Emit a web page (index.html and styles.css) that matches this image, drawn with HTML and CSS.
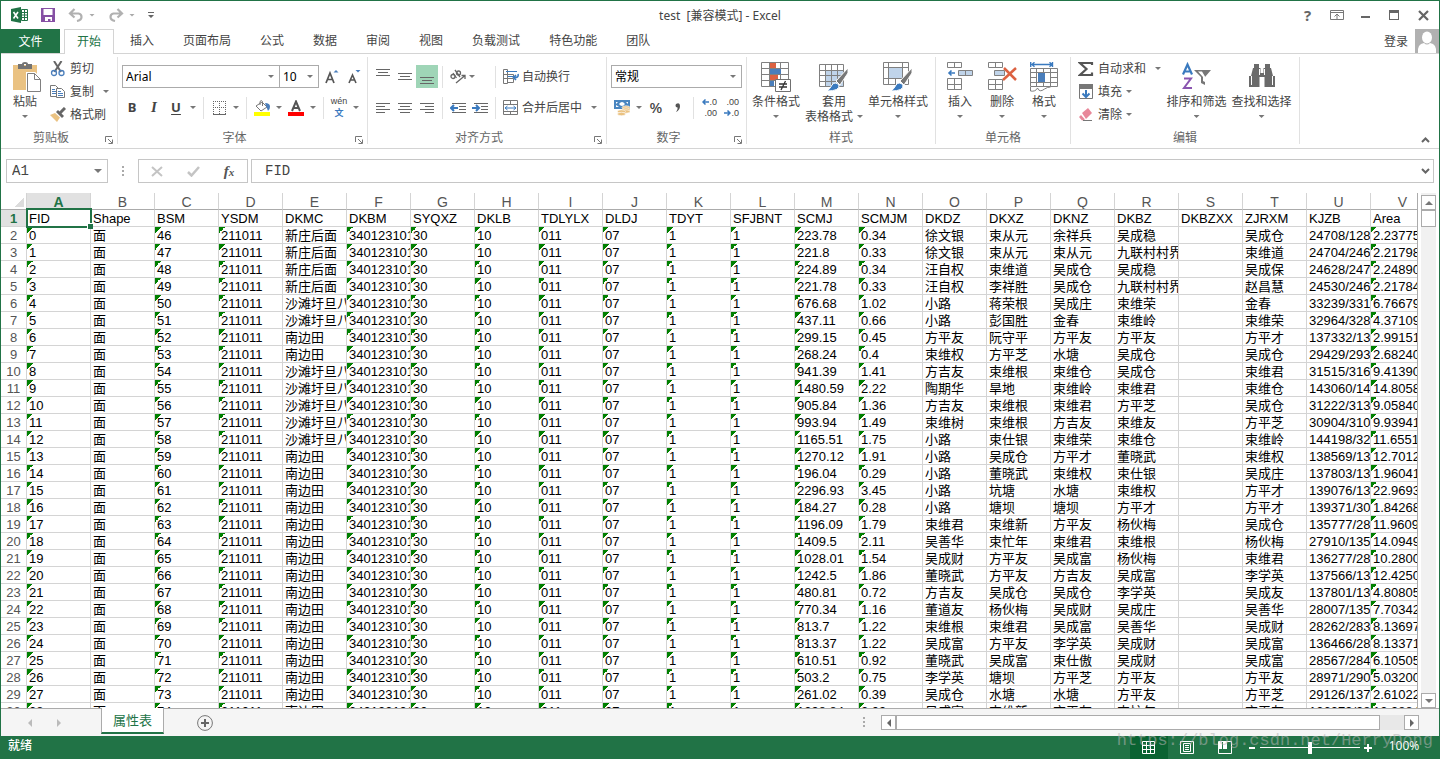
FILE: index.html
```html
<!DOCTYPE html>
<html lang="zh-CN">
<head>
<meta charset="utf-8">
<title>test [兼容模式] - Excel</title>
<link rel="stylesheet" href="styles.css">
</head>
<body>
<div class="app">
  <header class="titlebar">
    <div class="quick">
      <svg class="logo" width="18" height="16" viewBox="0 0 18 16"><path fill="#217346" d="M0 2 10 0v16L0 14z"/><path fill="#fff" stroke="#217346" d="M10.500 2.500h6v11h-6z"/><path stroke="#217346" d="M11 5.500h5M11 8h5M11 10.500h5M13.500 3v10"/><path stroke="#fff" stroke-width="1.600" d="m2.500 5 4.500 6.500M7 5l-4.500 6.500"/></svg>
      <button class="tool" aria-label="保存"><svg width="14" height="14" viewBox="0 0 14 14"><path fill="#8650a4" d="M0 0h14v14H0z"/><path fill="#fff" d="M2.500 1h9v6h-9zM4 9h7v4H9.500v-2H7v2H4z"/></svg></button>
      <button class="tool" aria-label="撤消"><svg width="16" height="14" viewBox="0 0 16 14"><path fill="none" stroke="#b1b1b1" stroke-width="2.200" d="M2 5.500h8.500q3 .500 3 3.500t-4.500 4M6.500 1 2 5.500 6.500 9.500"/></svg></button>
      <span class="caret light"></span>
      <button class="tool redo" aria-label="恢复"><svg width="16" height="14" viewBox="0 0 16 14"><path fill="none" stroke="#b1b1b1" stroke-width="2.200" d="M14 5.500H5.500q-3 .500-3 3.500T7 13M9.500 1 14 5.500 9.500 9.500"/></svg></button>
      <span class="caret light"></span>
      <button class="tool custom" aria-label="自定义快速访问工具栏"><svg width="6" height="7" viewBox="0 0 6 7"><path fill="#666" d="M0 0h6v1H0zM0 3h6L3 6z"/></svg></button>
    </div>
    <h1 class="title">test&nbsp; [兼容模式] - Excel</h1>
    <div class="window-tools">
      <button aria-label="帮助" class="help">?</button>
      <button aria-label="功能区显示选项"><svg width="14" height="12" viewBox="0 0 14 12" fill="none" stroke="#777"><path d="M.5 1.500h13v9H.5zM.5 3.500h13M7 10V5.500M4.500 7.500 7 5l2.500 2.500"/></svg></button>
      <button aria-label="最小化"><svg width="10" height="12" viewBox="0 0 10 12"><path fill="#666" d="M0 7h9v2H0z"/></svg></button>
      <button aria-label="最大化"><svg width="11" height="11" viewBox="0 0 11 11"><path fill="#666" d="M0 0h10v10H0zm1 3v6h8V3z" fill-rule="evenodd"/></svg></button>
      <button aria-label="关闭"><svg width="11" height="11" viewBox="0 0 11 11"><path stroke="#666" stroke-width="2.200" d="m1 1 9 9M10 1l-9 9"/></svg></button>
    </div>
  </header>

  <nav class="tabs">
    <button class="file">文件</button>
    <button class="tab active">开始</button>
    <button class="tab">插入</button>
    <button class="tab">页面布局</button>
    <button class="tab">公式</button>
    <button class="tab">数据</button>
    <button class="tab">审阅</button>
    <button class="tab">视图</button>
    <button class="tab">负载测试</button>
    <button class="tab">特色功能</button>
    <button class="tab">团队</button>
    <button class="login">登录<svg width="24" height="24" viewBox="0 0 24 24"><path fill="#b1b1b1" d="M0 0h24v24H0z"/><ellipse cx="12" cy="8.500" rx="5" ry="6" fill="#fff"/><path fill="#fff" d="M3 24q-1-9 6-10 3 3 6 0 7 1 6 10z"/></svg></button>
  </nav>

  <main class="ribbon">
    <section class="group clipboard">
      <div class="body">
        <button class="big paste"><svg width="32" height="30" viewBox="0 0 32 30"><path fill="#eac282" d="M4 3h24v25H4z"/><path fill="#737373" d="M9 2h4q0-2 3-2t3 2h4v5H9zm6 0v2h2V2z"/><path fill="#fff" stroke="#fff" stroke-width="3" d="M18.500 11.500h7l6 6v12h-13z"/><path fill="#fff" stroke="#808080" d="M18.500 11.500h7l6 6v12h-13zM25.500 11.500v6h6"/></svg><span>粘贴</span><i class="caret"></i></button>
        <div class="list">
          <button class="row"><svg width="16" height="16" viewBox="0 0 16 16" fill="none"><path stroke="#666" stroke-width="2" d="M4 0l7 11M11.500 0 4.500 11"/><circle cx="4" cy="12" r="2.500" stroke="#4a7ebb" stroke-width="1.300"/><circle cx="11.500" cy="12" r="2.500" stroke="#4a7ebb" stroke-width="1.300"/></svg><span>剪切</span></button>
          <button class="row"><svg width="16" height="16" viewBox="0 0 16 16" fill="#fff" stroke="#777"><path d="M.5 1.500h5l3 3v8h-8z"/><path stroke="#4a7ebb" d="M2 5.500h3M2 7.500h4M2 9.500h4"/><path d="M6.500 4.500h5l3 3v6h-8z"/><path stroke="#4a7ebb" d="M8 7.500h3M8 9.500h5M8 11.500h5"/></svg><span>复制</span><i class="caret far"></i></button>
          <button class="row"><svg width="16" height="16" viewBox="0 0 16 16"><path fill="#eac282" d="m0 8 5-2 5 4.500L7 15z"/><path fill="#666" d="m6 5 2-2 6 6-2 2z"/><path stroke="#666" stroke-width="3" d="m10 6 5-5"/></svg><span>格式刷</span></button>
        </div>
      </div>
      <footer><span>剪贴板</span><button class="launch" aria-label="剪贴板选项"><svg width="8" height="8" viewBox="0 0 8 8"><path d="M.5 6V.5H7M3 3l4 4M7.500 3.500v4h-4" fill="none" stroke="#777"/></svg></button></footer>
    </section>

    <section class="group font">
      <div class="body lines">
        <div class="line combos">
          <label class="combo name"><select aria-label="字体"><option>Arial</option></select></label><label class="combo size"><select aria-label="字号"><option>10</option></select></label>
          <button class="tool grow" aria-label="增大字号"><svg width="14" height="16" viewBox="0 0 14 16"><path fill="none" stroke="#555" stroke-width="1.700" d="M1 14 5 4l4 10M2.500 10.500h5"/><path fill="#4a7ebb" d="M8.500 3.500h5L11 1z"/></svg></button>
          <button class="tool" aria-label="减小字号"><svg width="14" height="16" viewBox="0 0 14 16"><path fill="none" stroke="#555" stroke-width="1.600" d="m2 14 3.500-8L9 14M3.500 11h4"/><path fill="#4a7ebb" d="M8.500 1h5L11 3.500z"/></svg></button>
        </div>
        <div class="line">
          <button class="tool bold">B</button><button class="tool italic">I</button><button class="tool under">U</button><button class="drop" aria-label="下划线选项"><i class="caret"></i></button>
          <hr>
          <button class="tool" aria-label="边框"><svg width="13" height="14" viewBox="0 0 13 14" fill="none" stroke="#666" shape-rendering="crispEdges"><path stroke-dasharray="1 1" d="M0 .5h13M0 6.500h13M.5 0v13M6.500 0v13M12.500 0v13"/><path d="M0 13.500h13"/></svg></button><button class="drop" aria-label="边框选项"><i class="caret"></i></button>
          <hr>
          <button class="tool" aria-label="填充颜色"><svg width="16" height="16" viewBox="0 0 16 16"><path fill="#ff0" d="M0 12h16v4H0z"/><path fill="#fff" stroke="#777" d="m2 6 6-4 5 5-6 4zM6 5V1.500q1.500-2 2.500 0V6"/><path fill="#4a7ebb" d="M11 3q5 0 5 3.500t-2 4.500z"/></svg></button><button class="drop" aria-label="填充颜色选项"><i class="caret"></i></button>
          <button class="tool" aria-label="字体颜色"><svg width="16" height="16" viewBox="0 0 16 16"><path fill="red" d="M0 12h16v4H0z"/><path fill="none" stroke="#555" stroke-width="2" d="m4 11 4-9.500L12 11M5.500 8h5"/></svg></button><button class="drop" aria-label="字体颜色选项"><i class="caret"></i></button>
          <hr>
          <button class="tool wen"><span>wén</span><b>文</b></button><button class="drop" aria-label="拼音选项"><i class="caret"></i></button>
        </div>
      </div>
      <footer><span>字体</span><button class="launch" aria-label="字体选项"><svg width="8" height="8" viewBox="0 0 8 8"><path d="M.5 6V.5H7M3 3l4 4M7.500 3.500v4h-4" fill="none" stroke="#777"/></svg></button></footer>
    </section>

    <section class="group align">
      <div class="body lines">
        <div class="line">
          <button class="tool" aria-label="顶端对齐"><svg width="14" height="16" viewBox="0 0 14 16" stroke="#666"><path d="M0 .5h14M2 3.500h10M0 6.500h14"/></svg></button><button class="tool" aria-label="垂直居中"><svg width="14" height="16" viewBox="0 0 14 16" stroke="#666"><path d="M0 4.500h14M2 7.500h10M0 10.500h14"/></svg></button><button class="tool on" aria-label="底端对齐"><svg width="14" height="16" viewBox="0 0 14 16" stroke="#666"><path d="M0 8.500h14M2 11.500h10M0 14.500h14"/></svg></button>
          <hr>
          <button class="tool" aria-label="方向"><svg width="16" height="16" viewBox="0 0 16 16" fill="none" stroke="#666" stroke-width="1.300"><circle cx="3" cy="7.500" r="2"/><path d="m3 4 3.500 5M5 1l5 7"/><circle cx="8.500" cy="4" r="2"/><path d="m6 14 9-7.500M11.500 6.500H15V10"/></svg></button><button class="drop wide" aria-label="方向选项"><i class="caret"></i></button>
          <hr>
          <button class="text"><svg width="16" height="16" viewBox="0 0 16 16" fill="none" stroke="#777"><path d="M.5.5h4v14h-4zM.5 5.500h10v4H.5zM4 13.500h6.500V10"/><path stroke="#3a7abf" d="M3 2.500h11M5 7.500h5"/><path stroke="#3a7abf" stroke-width="1.600" d="M15 5q1 4-4 3.500M13 6l-2.500 2.500L13 11"/></svg><span>自动换行</span></button>
        </div>
        <div class="line">
          <button class="tool" aria-label="左对齐"><svg width="14" height="12" viewBox="0 0 14 12" stroke="#666"><path d="M0 1.500h14M0 4.500h9M0 7.500h14M0 10.500h9"/></svg></button><button class="tool" aria-label="居中"><svg width="14" height="12" viewBox="0 0 14 12" stroke="#666"><path d="M0 1.500h14M2 4.500h10M0 7.500h14M2 10.500h10"/></svg></button><button class="tool" aria-label="右对齐"><svg width="14" height="12" viewBox="0 0 14 12" stroke="#666"><path d="M0 1.500h14M5 4.500h9M0 7.500h14M5 10.500h9"/></svg></button>
          <hr>
          <button class="tool" aria-label="减少缩进量"><svg width="16" height="12" viewBox="0 0 16 12" stroke="#666" fill="none"><path d="M2 1.500h14M9 4.500h7M9 7.500h7M2 10.500h14"/><path stroke="#3a7abf" stroke-width="2" d="M8 6H1M4 3 1 6l3 3"/></svg></button><button class="tool" aria-label="增加缩进量"><svg width="16" height="12" viewBox="0 0 16 12" stroke="#666" fill="none"><path d="M2 1.500h14M9 4.500h7M9 7.500h7M2 10.500h14"/><path stroke="#3a7abf" stroke-width="2" d="M0 6h7M4 3l3 3-3 3"/></svg></button>
          <hr>
          <button class="text"><svg width="16" height="16" viewBox="0 0 16 16" fill="none" stroke="#777"><path d="M.5.5h14v14H.5zM.5 4.500h14M.5 11.500h14M7.500 0v4M7.500 12v3"/><path stroke="#3a7abf" d="M2 8h11M4.500 6 2 8l2.500 2M10.500 6 13 8l-2.500 2"/></svg><span>合并后居中</span></button><button class="drop gap" aria-label="合并选项"><i class="caret"></i></button>
        </div>
      </div>
      <footer><span>对齐方式</span><button class="launch" aria-label="对齐选项"><svg width="8" height="8" viewBox="0 0 8 8"><path d="M.5 6V.5H7M3 3l4 4M7.500 3.500v4h-4" fill="none" stroke="#777"/></svg></button></footer>
    </section>

    <section class="group number">
      <div class="body lines">
        <div class="line"><label class="combo format"><select aria-label="数字格式"><option>常规</option></select></label></div>
        <div class="line">
          <button class="tool" aria-label="会计数字格式"><svg width="16" height="16" viewBox="0 0 16 16"><path fill="#4a86c0" d="M0 0h16v9H0z"/><path fill="#fff" d="M2 2h2L2 4zM14 2h-2l2 2zM2 7h3L2 5zM5 4q3-4 6 0-3 4-6 0z"/><g fill="#eac282" stroke="#fff" stroke-width=".6"><ellipse cx="12" cy="7.500" rx="4" ry="1.700"/><ellipse cx="12" cy="9.500" rx="4" ry="1.700"/><ellipse cx="12" cy="11.500" rx="4" ry="1.700"/><ellipse cx="7.500" cy="11.500" rx="4" ry="1.700"/><ellipse cx="7.500" cy="14" rx="4" ry="1.700"/></g></svg></button><button class="drop" aria-label="会计格式选项"><i class="caret"></i></button><button class="tool percent">%</button><button class="tool" aria-label="千位分隔样式"><svg width="6" height="10" viewBox="0 0 6 10"><path fill="#555" d="M1 1q4-2 4 2 0 4-4 6 2-3 1.500-4.500Q-.5 4 1 1z"/></svg></button>
          <hr>
          <button class="tool dec" aria-label="增加小数位数"><span><svg width="7" height="6" viewBox="0 0 7 6"><path fill="none" stroke="#3a7abf" stroke-width="1.500" d="M7 3H1M3.500.5 1 3l2.500 2.500"/></svg>.0</span><span>.00</span></button><button class="tool dec" aria-label="减少小数位数"><span>.00</span><span><svg width="7" height="6" viewBox="0 0 7 6"><path fill="none" stroke="#3a7abf" stroke-width="1.500" d="M0 3h6M3.500.5 6 3 3.500 5.500"/></svg>.0</span></button>
        </div>
      </div>
      <footer><span>数字</span><button class="launch" aria-label="数字选项"><svg width="8" height="8" viewBox="0 0 8 8"><path d="M.5 6V.5H7M3 3l4 4M7.500 3.500v4h-4" fill="none" stroke="#777"/></svg></button></footer>
    </section>

    <section class="group styles">
      <div class="body">
        <button class="big cond"><svg width="30" height="30" viewBox="0 0 30 30"><path fill="#fff" stroke="#808080" d="M.5.5h27v24H.5zM.5 6.500h27M.5 12.500h27M.5 18.500h27M8.500 0v24M19.500 0v24"/><path fill="#dc6141" d="M9 1h6v5H9zM9 13h8v5H9z"/><path fill="#4a7ebb" d="M9 7h11v5H9zM9 19h4v5H9z"/><path fill="#fff" stroke="#707070" d="M14.500 17.500h15v12h-15z"/><path stroke="#333" stroke-width="1.300" d="M18 22h8M18 25h8M24.500 19l-4.500 9"/></svg><span>条件格式</span><i class="caret"></i></button>
        <button class="big table-style"><svg width="30" height="30" viewBox="0 0 30 30"><path fill="#fff" d="M.5 2.500h24v22H.5z"/><path fill="#c0d4ea" d="M7 8h18v17H7z"/><path fill="none" stroke="#808080" d="M.5 2.500h24v22H.5zM.5 8.500h24M.5 13.500h24M.5 19.500h24M6.500 2v22M12.500 2v22M18.500 2v22"/><path fill="#777" stroke="#fff" d="M29 6 17 19l4 4 8-12z"/><path fill="#3a7abf" stroke="#fff" d="M8 29q3-2 5-6 3-4 7 0 1 6-12 6z"/></svg><span>套用</span><span class="inline">表格格式<i class="caret"></i></span></button>
        <button class="big cell-style"><svg width="30" height="30" viewBox="0 0 30 30"><path fill="#fff" stroke="#808080" d="M.5.5h25v22H.5zM.5 5.500h25M.5 16.500h25M5.500 0v22M19.500 0v22M12.500 17v5"/><path fill="#c0d4ea" d="M6 6h13v10H6z"/><path fill="#777" stroke="#fff" d="M29 6 17 19l4 4 8-12z"/><path fill="#3a7abf" stroke="#fff" d="M8 29q3-2 5-6 3-4 7 0 1 6-12 6z"/></svg><span>单元格样式</span><i class="caret"></i></button>
      </div>
      <footer><span>样式</span></footer>
    </section>

    <section class="group cells">
      <div class="body">
        <button class="big"><svg width="28" height="30" viewBox="0 0 28 30" fill="none" stroke="#808080"><path d="M1.500.5h14v5h-14zM8.500 0v5M1.500 16.500h14v11h-14zM8.500 16v11M1.500 22.500h14"/><path fill="#c0d4ea" d="M12.500 8.500h14v5h-14zM19.500 8v5"/><path stroke="#3a7abf" stroke-width="1.600" d="M9 11H3M5.500 8.500 3 11l2.500 2.500"/></svg><span>插入</span><i class="caret"></i></button>
        <button class="big"><svg width="30" height="30" viewBox="0 0 30 30" fill="none" stroke="#808080"><path d="M1.500.5h14v5h-14zM8.500 0v5M1.500 17.500h14v10h-14zM8.500 17v10M1.500 22.500h14"/><path fill="#c0d4ea" d="M7.500 8.500h10v5h-10z"/><path stroke="#dc6141" stroke-width="2.500" d="m17 6 12 12M29 6 16 18"/></svg><span>删除</span><i class="caret"></i></button>
        <button class="big"><svg width="28" height="30" viewBox="0 0 28 30" fill="none" stroke="#808080"><path d="M.5 6.500h27v18H.5zM.5 10.500h27M.5 20.500h27M6.500 6v18M13.500 6v5M13.500 20v5M20.500 6v18M.5 15.500h6M20.500 15.500h7M.5 25v4q5 1 7-3 2 5 7 1 3-2 6-2"/><path fill="#4a7ebb" stroke="none" d="M8 11h7v9H8z"/><path stroke="#3a7abf" stroke-width="1.400" d="M.7 0v5M22.500 0v5M2 2.500h20M4.500.3 2 2.500l2.500 2.200M19.500.3 22 2.500l-2.500 2.200"/></svg><span>格式</span><i class="caret"></i></button>
      </div>
      <footer><span>单元格</span></footer>
    </section>

    <section class="group edit">
      <div class="body">
        <div class="list">
          <button class="row"><svg width="16" height="16" viewBox="0 0 16 16"><path fill="none" stroke="#555" stroke-width="2.200" d="M14 4V2H2l6.500 6L2 14h12v-2.500"/></svg><span>自动求和</span><i class="caret far"></i></button>
          <button class="row"><svg width="16" height="16" viewBox="0 0 16 16"><path fill="#fff" stroke="#777" d="M1.500 1.500h13v13h-13z"/><path fill="#777" d="M1 0h14v5H1z"/><path fill="none" stroke="#3a7abf" stroke-width="2" d="M8 6v7M4.500 9.500 8 13l3.500-3.500"/></svg><span>填充</span><i class="caret"></i></button>
          <button class="row"><svg width="16" height="16" viewBox="0 0 16 16"><path fill="#e8879a" d="m4 6 6-5 4 5-6 6z"/><path fill="#e8879a" d="m1 10 2-2 4 4.500-3 1z"/><path stroke="#777" d="M5 13.500h9"/></svg><span>清除</span><i class="caret"></i></button>
        </div>
        <button class="big wide-text"><svg width="30" height="30" viewBox="0 0 30 30" fill="none"><path stroke="#3a7abf" stroke-width="2.200" d="m1 12.500 4.500-10 4.500 10M3 9.500h5"/><path stroke="#8a55b0" stroke-width="2" d="M2 16.500h7L2 26h8"/><path fill="#777" d="M12 8h17l-6 7v8l-4-2v-6z"/><path fill="#fff" d="M16 9.500h4l3 5V20l-2-1v-4z"/></svg><span>排序和筛选</span><i class="caret"></i></button>
        <button class="big wide-text"><svg width="26" height="30" viewBox="0 0 26 30"><path fill="#6a6a6a" d="M5 2h5v4h1.500v5h3V6H16V2h5v4h1l2 8h2v11H15.500V15h-5v10H0V14h2l2-8h1z"/><path stroke="#fff" d="M2.500 14v9M10.500 7v6M15.500 7v6M23.500 14v9"/></svg><span>查找和选择</span><i class="caret"></i></button>
      </div>
      <footer><span>编辑</span></footer>
    </section>
    <button class="collapse" aria-label="折叠功能区"><svg width="9" height="6" viewBox="0 0 9 6"><path fill="none" stroke="#666" stroke-width="2" d="m1 5 3.500-3.500L8 5"/></svg></button>
  </main>

  <div class="formula">
    <label class="namebox"><input aria-label="名称框" value="A1"></label>
    <svg class="grip" width="2" height="11" viewBox="0 0 2 11"><path fill="#aaa" d="M0 0h2v2H0zM0 4h2v2H0zM0 8h2v2H0z"/></svg>
    <div class="fx">
      <button aria-label="取消"><svg width="12" height="11" viewBox="0 0 12 11"><path stroke="#c4c4c4" stroke-width="2" d="m1 1 10 9M11 1 1 10"/></svg></button>
      <button aria-label="输入"><svg width="13" height="11" viewBox="0 0 13 11"><path fill="none" stroke="#c4c4c4" stroke-width="2.500" d="m1 6 3.500 3.500L12 1"/></svg></button>
      <button class="fn"><i>f</i><small>x</small></button>
    </div>
    <div class="entry"><input aria-label="编辑栏" value="FID"><button aria-label="展开编辑栏"><svg width="9" height="6" viewBox="0 0 9 6"><path fill="none" stroke="#666" stroke-width="2" d="m1 1 3.500 3.500L8 1"/></svg></button></div>
  </div>

  <div class="sheet">
    <div class="grid"><table><thead id="cols"></thead><tbody id="rows"></tbody></table></div>
    <div class="vbar">
      <button aria-label="向上滚动"><svg width="8" height="4" viewBox="0 0 8 4"><path fill="#777" d="M0 4h8L4 0z"/></svg></button>
      <div class="thumb"></div>
      <button class="end" aria-label="向下滚动"><svg width="8" height="4" viewBox="0 0 8 4"><path fill="#777" d="M0 0h8L4 4z"/></svg></button>
    </div>
  </div>

  <div class="sheetbar">
    <button class="nav" aria-label="上一张工作表"><svg width="4" height="8" viewBox="0 0 4 8"><path fill="#bbb" d="M4 0v8L0 4z"/></svg></button>
    <button class="nav" aria-label="下一张工作表"><svg width="4" height="8" viewBox="0 0 4 8"><path fill="#bbb" d="M0 0v8l4-4z"/></svg></button>
    <button class="sheet-tab">属性表</button>
    <button class="add" aria-label="新工作表"><svg width="16" height="16" viewBox="0 0 16 16"><circle cx="8" cy="8" r="7.400" fill="none" stroke="#777"/><path fill="#666" d="M7 4h2v3h3v2H9v3H7V9H4V7h3z"/></svg></button>
    <svg class="grip" width="2" height="11" viewBox="0 0 2 11"><path fill="#aaa" d="M0 0h2v2H0zM0 4h2v2H0zM0 8h2v2H0z"/></svg>
    <div class="hbar">
      <button aria-label="向左滚动"><svg width="4" height="8" viewBox="0 0 4 8"><path fill="#666" d="M4 0v8L0 4z"/></svg></button>
      <div class="thumb"></div>
      <button class="end" aria-label="向右滚动"><svg width="4" height="8" viewBox="0 0 4 8"><path fill="#666" d="M0 0v8l4-4z"/></svg></button>
    </div>
  </div>

  <footer class="status">
    <span class="ready">就绪</span>
    <button class="view on" aria-label="普通"><svg width="14" height="14" viewBox="0 0 14 14" fill="none" stroke="#fff"><path d="M.5.5h12v12H.5zM.5 4.500h12M.5 8.500h12M4.500 0v13M8.500 0v13"/></svg></button>
    <button class="view" aria-label="页面布局"><svg width="14" height="14" viewBox="0 0 14 14" fill="none" stroke="#fff"><path d="M.5.5h13v12H.5zM3.500 2.500h7v8h-7zM5 4.500h4M5 6.500h4M5 8.500h4"/></svg></button>
    <button class="view" aria-label="分页预览"><svg width="14" height="14" viewBox="0 0 14 14"><path fill="none" stroke="#fff" d="M.5.5h13v12H.5z"/><path fill="#fff" d="M1 1h3v7H1zM5 1h4v7H5z"/></svg></button>
    <button class="zoom-step" aria-label="缩小"><svg width="6" height="8" viewBox="0 0 6 8"><path fill="#fff" d="M0 3h6v2H0z"/></svg></button>
    <input class="zoom" type="range" min="0" max="100" value="50" aria-label="显示比例">
    <button class="zoom-step" aria-label="放大"><svg width="8" height="8" viewBox="0 0 8 8"><path fill="#fff" d="M3 0h2v3h3v2H5v3H3V5H0V3h3z"/></svg></button>
    <button class="level">100%</button>
  </footer>
  <div class="watermark">https://blog.csdn.net/HerryDong</div>
</div>
<script src="sheet.js"></script>
</body>
</html>
```
FILE: styles.css
```css
* { box-sizing: border-box; }
body { margin: 0; font: 12px/15px "Noto Sans", "Noto Sans CJK SC", sans-serif; color: #444; }
button { margin: 0; padding: 0; border: 0; background: none; font: inherit; color: inherit; display: flex; align-items: center; justify-content: center; white-space: nowrap; }
svg { display: block; flex: none; }
input, select { font: inherit; color: inherit; border: 0; background: none; padding: 0; margin: 0; min-width: 0; appearance: none; outline: 0; }
.caret { flex: none; width: 6px; height: 3px; background: #777; clip-path: polygon(0 0, 100% 0, 50% 100%); }
.caret.light { background: #aaa; }

.app { position: relative; display: flex; flex-direction: column; height: 100vh; overflow: hidden; border: 1px solid #217346; border-bottom: 0; background: #fff; }

.titlebar { display: grid; grid-template-columns: 1fr auto 1fr; align-items: center; height: 28px; }
.quick { display: flex; align-items: center; padding-left: 10px; }
.quick .logo { margin-right: 8px; }
.quick .tool { width: 22px; height: 22px; margin-right: 6px; }
.quick .tool + .tool { margin-right: 2px; }
.quick .caret { margin-right: 10px; }
.quick .redo { margin-right: 2px; }
.quick .custom { width: 12px; }
.title { margin: 0; font-size: 12px; font-weight: 400; }
.window-tools { display: flex; justify-content: flex-end; padding-right: 1px; }
.window-tools button { width: 29px; height: 24px; }
.window-tools .help { font-size: 15px; font-weight: 700; color: #666; }

.tabs { display: flex; align-items: stretch; height: 25px; border-bottom: 1px solid #d4d4d4; gap: 3px; }
.file { width: 59px; margin-right: 1px; background: #217346; color: #fff; }
.tab { padding: 0 13px 2px; }
.tab.active { padding: 0 12px 2px; margin-bottom: -1px; border: 1px solid #d4d4d4; border-bottom: 0; background: #fff; color: #217346; }
.login { margin-left: auto; gap: 7px; }

.ribbon { display: flex; padding: 3px 0 4px; border-bottom: 1px solid #d4d4d4; height: 95px; }
.group { display: flex; flex-direction: column; border-right: 1px solid #e1e1e1; flex: none; }
.group footer { display: flex; align-items: center; height: 14px; margin-top: 4px; color: #666; }
.group footer span { flex: 1; text-align: center; }
.launch { width: 16px; height: 8px; align-self: flex-end; }
.body { display: flex; height: 69px; padding-left: 3px; }
.clipboard { width: 117px; }
.font { width: 250px; }
.align { width: 239px; }
.number { width: 140px; }
.styles { width: 189px; }
.cells { width: 135px; }
.edit { width: 229px; }
.align .body, .number .body, .edit .body { padding-left: 4px; }
.styles .body { padding-left: 2px; }
.big { flex-direction: column; justify-content: flex-start; width: 42px; padding-top: 5px; }
.big svg { height: 30px; margin-bottom: 2px; }
.big > .caret { margin-top: 6px; }
.inline { display: flex; align-items: center; gap: 4px; }
.cond { width: 54px; }
.table-style { width: 62px; }
.cell-style { width: 66px; }
.wide-text { width: 65px; }
.list { display: flex; flex-direction: column; }
.edit .list { width: 89px; }
.row { height: 23px; padding-left: 4px; gap: 4px; justify-content: flex-start; }
.edit .row { padding-left: 3px; }
.caret.far { margin-left: 5px; }
.lines { flex-direction: column; padding-top: 8px; gap: 8px; }
.line { display: flex; height: 23px; align-items: center; }
.combos { padding-left: 1px; }
.line hr { flex: none; width: 1px; height: 22px; margin: 0 4px; border: 0; background: #e1e1e1; }
.tool { width: 22px; height: 23px; }
.tool.on { background: #9fd5b7; }
.drop { width: 12px; height: 23px; }
.drop.wide { width: 22px; justify-content: flex-start; }
.drop.gap { margin-left: 6px; }
.text svg { width: 16px; margin: 0 3px; }
.combo { position: relative; display: flex; height: 23px; border: 1px solid #ababab; color: #000; }
.combo select { flex: 1; padding-left: 3px; }
.combo::after, .namebox::after { content: ""; position: absolute; right: 5px; top: 9px; width: 6px; height: 3px; background: #777; clip-path: polygon(0 0, 100% 0, 50% 100%); pointer-events: none; }
.combo.name { width: 158px; }
.combo.size { width: 40px; margin-left: -1px; }
.combo.format { width: 131px; }
.grow { margin-left: 2px; }
.bold { font-weight: 700; font-size: 13px; }
.italic { font-weight: 700; font-style: italic; font-family: "Liberation Serif", serif; font-size: 15px; }
.under { font-weight: 700; font-size: 13px; text-decoration: underline; text-underline-offset: 2px; }
.percent { font-size: 15px; font-weight: 500; }
.wen { flex-direction: column; font: 9px/11px "Liberation Sans", "Noto Sans CJK SC", sans-serif; }
.wen b { color: #3a7abf; font-size: 9px; line-height: 12px; }
.dec { flex-direction: column; align-items: flex-end; padding-right: 3px; font: 9px/11px "Liberation Sans", sans-serif; }
.dec span { display: flex; align-items: center; }
.collapse { margin-left: auto; align-self: flex-end; width: 28px; height: 8px; }

.formula { display: flex; align-items: center; height: 44px; padding: 0 5px; font: 14px "Liberation Mono", monospace; }
.namebox { position: relative; display: flex; width: 102px; height: 24px; border: 1px solid #c6c6c6; padding-left: 5px; }
.namebox input { flex: 1; }
.namebox::after { width: 8px; height: 4px; }
.formula .grip { margin: 0 14px; }
.fx { display: flex; width: 110px; height: 24px; border: 1px solid #c6c6c6; }
.fx button { flex: 1; }
.fn { font: 700 15px "Liberation Serif", serif; color: #555; }
.fn small { font: italic 700 11px "Liberation Serif", serif; align-self: flex-end; padding-bottom: 4px; }
.entry { display: flex; flex: 1; height: 24px; margin-left: 3px; border: 1px solid #c6c6c6; padding-left: 13px; }
.entry input { flex: 1; }
.entry button { width: 16px; }

.sheet { display: flex; flex: 1; min-height: 0; }
.grid { flex: 1; overflow: hidden; min-width: 0; border-right: 1px solid #ababab; font: 13px/14px "Liberation Sans", "Noto Sans CJK SC", sans-serif; color: #000; }
table { table-layout: fixed; border-collapse: separate; border-spacing: 0; width: 1434px; }
tr { height: 17px; }
th, td { height: 17px; padding: 2px 0 0; border: 0 solid #d4d4d4; border-width: 0 1px 1px 0; overflow: hidden; white-space: nowrap; width: 64px; line-height: 14px; }
th { font-weight: 400; color: #555; text-align: center; }
thead th { border-bottom-color: #ababab; font-size: 14px; padding-top: 1px; }
th:first-child { width: 26px; }
thead th:first-child { background: linear-gradient(135deg, transparent 50%, #dcdcdc 50%) 13px 4px / 10px 10px no-repeat; }
th.sel { background: #e1e1e1; color: #217346; font-weight: 700; }
td { padding-left: 2px; }
td.flag { background: linear-gradient(135deg, #008000 50%, transparent 50%) 0 0 / 6px 6px no-repeat; }
td.current { position: relative; overflow: visible; }
.cursor { position: absolute; inset: -2px -2px -2px -1px; border: 2px solid #217346; }
.cursor::after { content: ""; position: absolute; right: -3px; bottom: -3px; width: 5px; height: 5px; background: #217346; border: solid #fff; border-width: 1px 0 0 1px; }
.vbar { display: flex; flex-direction: column; width: 21px; padding: 2px 3px 0; }
.vbar button { width: 15px; height: 15px; border: 1px solid #ababab; background: #fff; }
.vbar .thumb { width: 15px; height: 17px; border: 1px solid #ababab; background: #fff; }
.vbar { background: linear-gradient(#f1f1f1, #f1f1f1) 3px 0 / 15px 100% no-repeat; }
.vbar .end { margin-top: auto; }

.sheetbar { display: flex; align-items: center; height: 28px; background: #f5f5f5; border-top: 1px solid #ababab; }
.nav { width: 29px; height: 24px; }
.nav:first-child { margin-left: 14px; }
.sheet-tab { align-self: flex-start; width: 63px; height: 26px; margin: -1px 0 0 28px; border: 1px solid #ababab; border-width: 0 1px 0; border-bottom: 2px solid #217346; background: #fff; color: #217346; font-size: 13px; }
.add { margin-left: 33px; }
.sheetbar .grip { margin-left: auto; margin-right: 16px; }
.hbar { display: flex; width: 38%; max-width: 538px; height: 15px; margin-right: 20px; background: #e8e8e8; }
.hbar button { width: 15px; border: 1px solid #ababab; background: #fff; }
.hbar .thumb { width: 90%; border: 1px solid #ababab; background: #fff; }
.hbar .end { margin-left: auto; }

.status { display: flex; align-items: center; height: 23px; background: #217346; color: #fff; margin-right: -1px; }
.ready { margin-left: 7px; margin-right: auto; padding-bottom: 4px; font-weight: 500; }
.view { width: 38px; height: 23px; }
.view.on { background: #0a6332; }
.zoom-step { width: 16px; height: 16px; }
.zoom { width: 100px; height: 14px; }
.zoom::-webkit-slider-runnable-track { height: 12px; background: linear-gradient(#fff, #fff) 0 50% / 100% 1px no-repeat; }
.zoom::-webkit-slider-thumb { appearance: none; width: 4px; height: 12px; background: #fff; }
.level { width: 56px; margin-right: 8px; padding-bottom: 4px; }
.watermark { position: absolute; right: 6px; bottom: 8px; font: 17px/20px "Liberation Mono", monospace; color: #b4b4b4; opacity: .55; pointer-events: none; }
```
FILE: sheet.js
```js
const fields = "FID,Shape,BSM,YSDM,DKMC,DKBM,SYQXZ,DKLB,TDLYLX,DLDJ,TDYT,SFJBNT,SCMJ,SCMJM,DKDZ,DKXZ,DKNZ,DKBZ,DKBZXX,ZJRXM,KJZB,Area".split(",");

// SCMJ, SCMJM, DKDZ, DKXZ, DKNZ, DKBZ, ZJRXM, KJZB, Area
const parcels = `223.78 0.34 徐文银 束从元 余祥兵 吴成稳 吴成仓 24708/128 2.23775
221.8 0.33 徐文银 束从元 束从元 九联村村界 束维道 24704/246 2.21798
224.89 0.34 汪自权 束维道 吴成仓 吴成稳 吴成保 24628/247 2.24890
221.78 0.33 汪自权 李祥胜 吴成仓 九联村村界 赵昌慧 24530/246 2.21784
676.68 1.02 小路 蒋荣根 吴成庄 束维荣 金春 33239/331 6.76679
437.11 0.66 小路 彭国胜 金春 束维岭 束维荣 32964/328 4.37109
299.15 0.45 方平友 阮守平 方平友 方平友 方平才 137332/13 2.99151
268.24 0.4 束维权 方平芝 水塘 吴成仓 吴成仓 29429/293 2.68240
941.39 1.41 方吉友 束维根 束维仓 吴成仓 束维君 31515/316 9.41390
1480.59 2.22 陶期华 旱地 束维岭 束维君 束维仓 143060/14 14.8058
905.84 1.36 方吉友 束维根 束维君 方平芝 吴成仓 31222/313 9.05840
993.94 1.49 束维树 束维根 方吉友 束维友 方平芝 30904/310 9.93941
1165.51 1.75 小路 束仕银 束维荣 束维仓 束维岭 144198/32 11.6551
1270.12 1.91 小路 吴成仓 方平才 董晓武 束维权 138569/13 12.7012
196.04 0.29 小路 董晓武 束维权 束仕银 吴成庄 137803/13 1.96041
2296.93 3.45 小路 坑塘 水塘 束维权 方平才 139076/13 22.9693
184.27 0.28 小路 塘坝 塘坝 方平才 方平才 139371/30 1.84268
1196.09 1.79 束维君 束维新 方平友 杨伙梅 吴成仓 135777/28 11.9609
1409.5 2.11 吴善华 束忙年 束维君 束维根 杨伙梅 27910/135 14.0949
1028.01 1.54 吴成财 方平友 吴成富 杨伙梅 束维君 136277/28 10.2800
1242.5 1.86 董晓武 方平友 方吉友 吴成富 李学英 137566/13 12.4250
480.81 0.72 方吉友 吴成仓 吴成仓 李学英 吴成友 137801/13 4.80805
770.34 1.16 董道友 杨伙梅 吴成财 吴成庄 吴善华 28007/135 7.70342
813.7 1.22 束维根 束维君 吴成富 吴善华 吴成财 28262/283 8.13697
813.37 1.22 吴成富 方平友 李学英 吴成财 吴成富 136466/28 8.13371
610.51 0.92 董晓武 吴成富 束仕傲 吴成财 吴成富 28567/284 6.10505
503.2 0.75 李学英 塘坝 方平芝 方平友 方平友 28971/290 5.03200
261.02 0.39 吴成仓 水塘 水塘 方平友 方平芝 29126/137 2.61022
1398.84 2.09 吴成富 束维新 方平友 束忙年 方平友 136379/28 13.9884`.split("\n").map(line => line.split(" "));

const place = i => i < 4 ? "新庄后面" : i < 6 || (i > 7 && i < 13) ? "沙滩圩旦八" : "南边田";
const textColumns = new Set([1, 4, 14, 15, 16, 17, 18, 19, 20]);

document.getElementById("cols").innerHTML = "<tr><th></th>" + fields.map((_, i) =>
  `<th${i ? "" : ' class="sel"'}>${String.fromCharCode(65 + i)}</th>`).join("") + "</tr>";

const heading = '<tr><th class="sel">1</th>' + fields.map((name, i) =>
  i ? `<td>${name}</td>` : `<td class="current">${name}<span class="cursor"></span></td>`).join("") + "</tr>";

document.getElementById("rows").innerHTML = heading + parcels.map((p, i) => {
  const cells = [i, "面", 46 + i, "211011", place(i), "340123101", "30", "10", "011", "07", "1", "1", ...p.slice(0, 6), "", ...p.slice(6)];
  return `<tr><th>${i + 2}</th>` + cells.map((value, c) =>
    `<td${textColumns.has(c) ? "" : ' class="flag"'}>${value}</td>`).join("") + "</tr>";
}).join("");
```
